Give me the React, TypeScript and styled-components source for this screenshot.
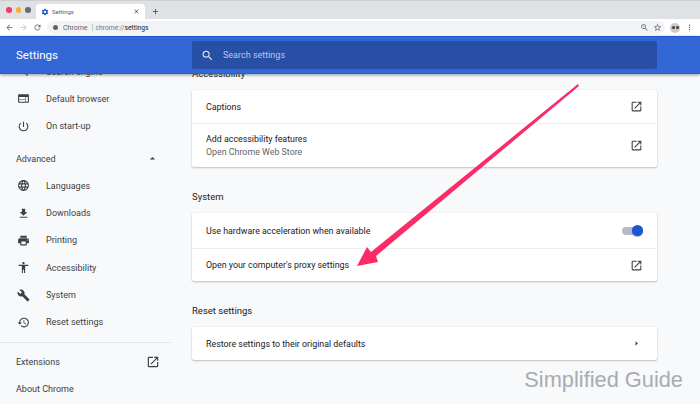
import styled, { createGlobalStyle } from 'styled-components';
import {
  MdAccessibility,
  MdAdd,
  MdArrowBack,
  MdArrowDropUp,
  MdArrowForward,
  MdArrowRight,
  MdBuild,
  MdClose,
  MdFileDownload,
  MdLanguage,
  MdMoreVert,
  MdOpenInNew,
  MdPowerSettingsNew,
  MdPrint,
  MdRefresh,
  MdRestore,
  MdSearch,
  MdSettings,
  MdStarBorder,
  MdWeb,
  MdZoomOut,
} from 'react-icons/md';

const GlobalStyle = createGlobalStyle`
  html, body {
    margin: 0;
    padding: 0;
    background: #f8f9fa;
  }
  * {
    box-sizing: border-box;
  }
`;

const menuTop = [
  { icon: <MdSearch />, label: 'Search engine' },
  { icon: <MdWeb />, label: 'Default browser' },
  { icon: <MdPowerSettingsNew />, label: 'On start-up' },
];

const menuAdvanced = [
  { icon: <MdLanguage />, label: 'Languages' },
  { icon: <MdFileDownload />, label: 'Downloads' },
  { icon: <MdPrint />, label: 'Printing' },
  { icon: <MdAccessibility />, label: 'Accessibility' },
  { icon: <MdBuild />, label: 'System' },
  { icon: <MdRestore />, label: 'Reset settings' },
];

const App = () => {
  return (
    <Page>
      <GlobalStyle />
      <TabStrip>
        <Lights>
          <Light $color="#f9375f" />
          <Light $color="#f5b335" />
          <Light $color="#6b6b6e" />
        </Lights>
        <Tab>
          <TabIcon>
            <MdSettings />
          </TabIcon>
          <TabTitle>Settings</TabTitle>
          <TabClose>
            <MdClose />
          </TabClose>
        </Tab>
        <NewTab>
          <MdAdd />
        </NewTab>
      </TabStrip>

      <Toolbar>
        <NavButton $muted={false}>
          <MdArrowBack />
        </NavButton>
        <NavButton $muted>
          <MdArrowForward />
        </NavButton>
        <NavButton $muted={false}>
          <MdRefresh />
        </NavButton>
        <Omnibox>
          <SiteDot />
          <SiteName>Chrome</SiteName>
          <OmniDivider />
          <Url>
            chrome://<strong>settings</strong>
          </Url>
          <OmniSpacer />
          <NavButton $muted={false}>
            <MdZoomOut />
          </NavButton>
          <NavButton $muted={false}>
            <MdStarBorder />
          </NavButton>
        </Omnibox>
        <Avatar>
          <AvatarEye />
          <AvatarEye />
        </Avatar>
        <NavButton $muted={false}>
          <MdMoreVert />
        </NavButton>
      </Toolbar>

      <Header>
        <HeaderTitle>Settings</HeaderTitle>
        <SearchBox>
          <SearchIcon>
            <MdSearch />
          </SearchIcon>
          <SearchText>Search settings</SearchText>
        </SearchBox>
      </Header>

      <Body>
        <Sidebar>
          <SidebarInner>
            {menuTop.map((item) => (
              <MenuItem key={item.label}>
                <MenuIcon>{item.icon}</MenuIcon>
                {item.label}
              </MenuItem>
            ))}
            <AdvancedRow>
              Advanced
              <Caret>
                <MdArrowDropUp />
              </Caret>
            </AdvancedRow>
            {menuAdvanced.map((item) => (
              <MenuItem key={item.label}>
                <MenuIcon>{item.icon}</MenuIcon>
                {item.label}
              </MenuItem>
            ))}
            <SideDivider />
            <PlainItem>
              Extensions
              <ExtIcon>
                <MdOpenInNew />
              </ExtIcon>
            </PlainItem>
            <PlainItem>About Chrome</PlainItem>
          </SidebarInner>
        </Sidebar>

        <Main>
          <MainInner>
            <Heading>Accessibility</Heading>
            <Card>
              <Row $height={33}>
                <Label>Captions</Label>
                <RowIcon>
                  <MdOpenInNew />
                </RowIcon>
              </Row>
              <Row $height={44}>
                <div>
                  <Label>Add accessibility features</Label>
                  <SubLabel>Open Chrome Web Store</SubLabel>
                </div>
                <RowIcon>
                  <MdOpenInNew />
                </RowIcon>
              </Row>
            </Card>
            <Heading>System</Heading>
            <Card>
              <Row $height={35}>
                <Label>Use hardware acceleration when available</Label>
                <Switch>
                  <SwitchKnob />
                </Switch>
              </Row>
              <Row $height={33}>
                <Label>Open your computer's proxy settings</Label>
                <RowIcon>
                  <MdOpenInNew />
                </RowIcon>
              </Row>
            </Card>
            <Heading>Reset settings</Heading>
            <Card>
              <Row $height={33}>
                <Label>Restore settings to their original defaults</Label>
                <RowCaret>
                  <MdArrowRight />
                </RowCaret>
              </Row>
            </Card>
          </MainInner>
        </Main>
      </Body>

      <Arrow viewBox="0 0 700 404">
        <polygon points="578,84 579,86 376,256 378,262 357,266 367,247 371,252" fill="#fb2b68" />
      </Arrow>
      <Watermark>Simplified Guide</Watermark>
    </Page>
  );
};

const Page = styled.div`
  position: relative;
  width: 700px;
  height: 404px;
  overflow: hidden;
  display: flex;
  flex-direction: column;
  background: #f8f9fa;
  font-family: Roboto, 'Liberation Sans', sans-serif;
  color: #202124;
`;

const TabStrip = styled.div`
  height: 19px;
  flex-shrink: 0;
  display: flex;
  align-items: flex-end;
  background: #dee1e6;
  border-top: 1px solid #cfcfd2;
`;

const Lights = styled.div`
  display: flex;
  gap: 4px;
  width: 36px;
  padding-left: 6px;
  align-self: flex-start;
  margin-top: 6px;
`;

const Light = styled.span<{ $color: string }>`
  width: 5.5px;
  height: 5.5px;
  border-radius: 50%;
  background: ${(p) => p.$color};
`;

const Tab = styled.div`
  width: 109px;
  height: 15px;
  display: flex;
  align-items: center;
  padding: 0 5px;
  background: #fff;
  border-radius: 4px 4px 0 0;
`;

const TabIcon = styled.span`
  display: flex;
  font-size: 8px;
  color: #1a56d6;
  margin-right: 3px;
`;

const TabTitle = styled.span`
  flex: 1;
  font-size: 6px;
  color: #5f6368;
`;

const TabClose = styled.span`
  display: flex;
  font-size: 7px;
  color: #3c4043;
`;

const NewTab = styled.span`
  display: flex;
  font-size: 9px;
  margin: 0 0 3px 6px;
  color: #3c4043;
`;

const Toolbar = styled.div`
  height: 17px;
  flex-shrink: 0;
  display: flex;
  align-items: center;
  padding: 0 6px 0 5px;
  gap: 5px;
  background: #fff;
`;

const NavButton = styled.span<{ $muted: boolean }>`
  display: flex;
  font-size: 9px;
  color: ${(p) => (p.$muted ? '#bcbfc4' : '#5f6368')};
`;

const Omnibox = styled.div`
  flex: 1;
  height: 13px;
  display: flex;
  align-items: center;
  gap: 4px;
  padding: 0 3px 0 6px;
  border-radius: 7px;
  background: #f1f3f4;
  font-size: 7px;
  color: #5f6368;
`;

const SiteDot = styled.span`
  width: 5px;
  height: 5px;
  border-radius: 50%;
  background: #5f6368;
`;

const SiteName = styled.span`
  margin-left: 1px;
`;

const OmniDivider = styled.span`
  width: 1px;
  height: 7px;
  background: #c4c6c9;
`;

const Url = styled.span`
  font-size: 6.7px;
  margin-left: -1px;
  color: #6f7377;
  strong {
    font-weight: 400;
    color: #202124;
  }
`;

const OmniSpacer = styled.span`
  flex: 1;
`;

const Avatar = styled.span`
  width: 10px;
  height: 10px;
  display: flex;
  align-items: center;
  justify-content: center;
  gap: 1px;
  border-radius: 50%;
  background: #d3c7c3;
`;

const AvatarEye = styled.span`
  width: 3px;
  height: 3px;
  border-radius: 50%;
  background: #3c4043;
`;

const Header = styled.header`
  position: relative;
  z-index: 2;
  height: 38px;
  flex-shrink: 0;
  display: flex;
  align-items: center;
  background: #3367d6;
  border-top: 1px solid #1f57cc;
  border-bottom: 1px solid #2a5fd0;
  box-shadow: 0 1px 3px rgba(60, 64, 67, 0.55);
`;

const HeaderTitle = styled.h1`
  width: 192px;
  margin: 0;
  padding-left: 16px;
  font-size: 11.5px;
  font-weight: 400;
  color: #fff;
`;

const SearchBox = styled.div`
  width: 465px;
  height: 28px;
  display: flex;
  align-items: center;
  padding-left: 9px;
  background: #274fa6;
  border-radius: 2px;
`;

const SearchIcon = styled.span`
  display: flex;
  font-size: 13px;
  color: #e8eaed;
`;

const SearchText = styled.span`
  margin-left: 9px;
  font-size: 9px;
  color: #b9c7e6;
`;

const Body = styled.div`
  flex: 1;
  min-height: 0;
  display: flex;
  overflow: hidden;
`;

const Sidebar = styled.nav`
  width: 192px;
  flex-shrink: 0;
  font-size: 9px;
  color: #3c4043;
`;

const SidebarInner = styled.div`
  width: 171px;
  margin-top: -16px;
`;

const MenuItem = styled.div`
  height: 27.3px;
  display: flex;
  align-items: center;
`;

const MenuIcon = styled.span`
  width: 46px;
  padding-left: 17px;
  display: flex;
  font-size: 13px;
  color: #3c4043;
`;

const AdvancedRow = styled.div`
  height: 27.3px;
  margin-top: 5px;
  padding: 0 15px 0 16px;
  display: flex;
  align-items: center;
  justify-content: space-between;
`;

const Caret = styled.span`
  display: flex;
  font-size: 13px;
  margin-right: -3px;
`;

const SideDivider = styled.div`
  height: 1px;
  margin-top: 6px;
  background: #e3e4e6;
`;

const PlainItem = styled.div`
  height: 27.3px;
  margin-top: 5px;
  margin-bottom: -5px;
  padding: 0 11px 0 16px;
  display: flex;
  align-items: center;
  justify-content: space-between;
`;

const ExtIcon = styled.span`
  display: flex;
  font-size: 14px;
  color: #3c4043;
`;

const Main = styled.main`
  width: 465px;
  flex-shrink: 0;
`;

const MainInner = styled.div`
  margin-top: -9px;
`;

const Heading = styled.h2`
  height: 17px;
  margin: 0;
  display: flex;
  align-items: center;
  font-size: 9.5px;
  font-weight: 400;
  color: #202124;
`;

const Card = styled.section`
  margin: 8px 0 21px;
  background: #fff;
  border-radius: 2px;
  box-shadow: 0 1px 2px rgba(60, 64, 67, 0.3), 0 0 1px rgba(60, 64, 67, 0.2);
`;

const Row = styled.div<{ $height: number }>`
  height: ${(p) => p.$height}px;
  display: flex;
  align-items: center;
  justify-content: space-between;
  padding: 0 14px;
  & + & {
    border-top: 1px solid #eceef0;
  }
`;

const Label = styled.div`
  padding-top: 1px;
  font-size: 8.85px;
  line-height: 13px;
  color: #202124;
`;

const SubLabel = styled.div`
  font-size: 8.85px;
  line-height: 13px;
  color: #5f6368;
`;

const RowIcon = styled.span`
  display: flex;
  font-size: 13px;
  color: #3c4043;
`;

const RowCaret = styled.span`
  display: flex;
  font-size: 11px;
  margin-right: 1px;
  color: #3c4043;
`;

const Switch = styled.span`
  position: relative;
  width: 21px;
  height: 8px;
  border-radius: 4px;
  background: #b4bccb;
`;

const SwitchKnob = styled.span`
  position: absolute;
  right: 0;
  top: -1.5px;
  width: 11px;
  height: 11px;
  border-radius: 50%;
  background: #1a56d6;
  box-shadow: 0 1px 1px rgba(0, 0, 0, 0.3);
`;

const Arrow = styled.svg`
  position: absolute;
  left: 0;
  top: 0;
  width: 700px;
  height: 404px;
  z-index: 3;
  pointer-events: none;
`;

const Watermark = styled.div`
  position: absolute;
  right: 17px;
  bottom: 11px;
  z-index: 3;
  font-family: 'Liberation Sans', Arial, sans-serif;
  font-size: 21.8px;
  color: #a9abb3;
`;

export default App;
